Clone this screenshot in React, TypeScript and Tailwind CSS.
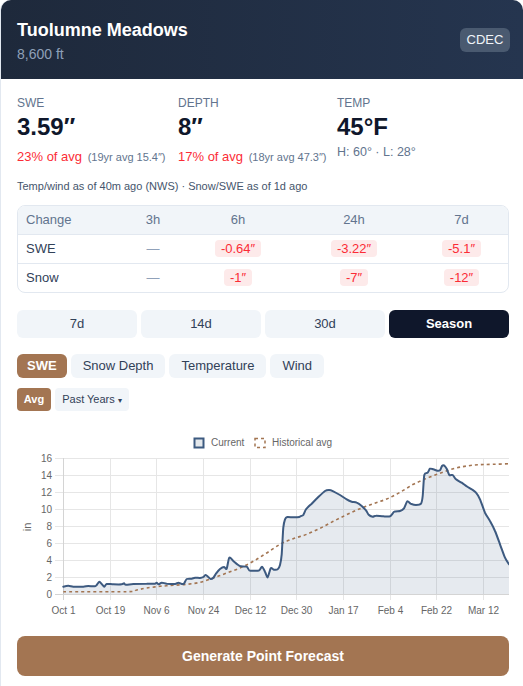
import React from "react";

const BROWN = "#a37552";
const NAVY = "#3d5a80";
const FONT = "Liberation Sans, Arial, sans-serif";

// points read off the reference, in 3x zoom units (x/3, 420 + y/3 -> page px)
const currentRaw: [number, number][] = [
  [190, 497], [205, 494], [220, 497], [250, 497], [265, 495], [285, 496], [290, 492], [298, 482],
  [306, 490], [313, 497], [320, 489], [340, 490], [365, 490], [372, 487], [378, 491], [400, 489],
  [440, 488], [465, 488], [470, 485], [476, 490], [485, 485], [500, 488], [525, 489], [535, 485],
  [545, 489], [552, 488], [560, 474], [575, 473], [585, 470], [600, 471], [610, 468], [617, 462],
  [625, 468], [632, 474], [640, 470], [648, 458], [660, 444], [672, 438], [680, 443], [688, 410],
  [700, 420], [712, 430], [722, 436], [740, 437], [748, 448], [762, 449], [778, 448], [786, 437],
  [795, 452], [803, 469], [812, 442], [822, 446], [833, 445], [840, 432], [845, 400], [850, 320],
  [855, 295], [862, 288], [880, 289], [898, 288], [903, 285], [910, 282], [918, 265], [935, 248],
  [955, 228], [975, 210], [987, 207], [1000, 211], [1020, 222], [1040, 235], [1055, 242],
  [1070, 245], [1085, 255], [1098, 268], [1106, 281], [1118, 287], [1128, 284], [1150, 286],
  [1170, 286], [1183, 272], [1200, 270], [1212, 262], [1222, 241], [1232, 248], [1248, 252],
  [1263, 248], [1268, 225], [1273, 162], [1283, 155], [1290, 143], [1300, 145], [1312, 149],
  [1320, 148], [1326, 135], [1332, 133], [1340, 143], [1348, 162], [1358, 162], [1368, 175],
  [1385, 185], [1400, 196], [1415, 205], [1428, 215], [1440, 235], [1455, 275], [1470, 300],
  [1485, 330], [1500, 370], [1515, 410], [1527, 430],
];

const avgRaw: [number, number][] = [
  [190, 512], [380, 512], [410, 507], [440, 501], [480, 496], [520, 493], [560, 490], [600, 484],
  [640, 471], [680, 456], [720, 441], [760, 421], [800, 396], [840, 370], [880, 353], [920, 340],
  [960, 322], [1000, 301], [1040, 281], [1080, 263], [1120, 248], [1160, 234], [1200, 214],
  [1240, 190], [1280, 172], [1320, 157], [1360, 143], [1400, 135], [1440, 131], [1480, 130],
  [1527, 128],
];

const toPage = (p: [number, number]): [number, number] => [p[0] / 3, 420 + p[1] / 3];
const current = currentRaw.map(toPage);
const avg = avgRaw.map(toPage);

function smooth(pts: [number, number][], k = 8) {
  let d = `M${pts[0][0].toFixed(1)},${pts[0][1].toFixed(1)}`;
  for (let i = 0; i < pts.length - 1; i++) {
    const p0 = pts[i - 1] ?? pts[i];
    const p1 = pts[i];
    const p2 = pts[i + 1];
    const p3 = pts[i + 2] ?? p2;
    const c1x = p1[0] + (p2[0] - p0[0]) / k;
    const c1y = p1[1] + (p2[1] - p0[1]) / k;
    const c2x = p2[0] - (p3[0] - p1[0]) / k;
    const c2y = p2[1] - (p3[1] - p1[1]) / k;
    d += ` C${c1x.toFixed(1)},${c1y.toFixed(1)} ${c2x.toFixed(1)},${c2y.toFixed(1)} ${p2[0].toFixed(1)},${p2[1].toFixed(1)}`;
  }
  return d;
}

const X0 = 63;
const X1 = 509;
const Y0 = 593;
const yOf = (v: number) => Y0 - v * 8.5;
const dates = ["Oct 1", "Oct 19", "Nov 6", "Nov 24", "Dec 12", "Dec 30", "Jan 17", "Feb 4", "Feb 22", "Mar 12"];

function SweChart() {
  const line = smooth(current);
  const area = `${line} L${X1},${Y0} L${X0},${Y0} Z`;
  return (
    <svg width={492} height={195} viewBox="17 425 492 195" className="block" fontFamily={FONT}>
      {/* legend */}
      <rect x={194.5} y={437.5} width={9} height={9} fill="#e4e8ec" stroke={NAVY} strokeWidth={2} />
      <text x={211} y={445} fontSize={10} fill="#666">Current</text>
      <rect x={255} y={437.5} width={10} height={9} fill="none" stroke={BROWN} strokeWidth={1.5} strokeDasharray="3 3" />
      <text x={272} y={445} fontSize={10} fill="#666">Historical avg</text>

      {/* grid */}
      {[0, 2, 4, 6, 8, 10, 12, 14, 16].map((v) => (
        <g key={v}>
          <line x1={55} x2={X1} y1={yOf(v) + 0.5} y2={yOf(v) + 0.5} stroke="#e6e6e6" />
          <text x={52} y={yOf(v) + 3.5} fontSize={10} fill="#666" textAnchor="end">{v}</text>
        </g>
      ))}
      {dates.map((d, i) => {
        const x = Math.round(X0 + i * 46.67) + 0.5;
        return (
          <g key={d}>
            <line x1={x} x2={x} y1={457} y2={599} stroke="#e6e6e6" />
            <text x={x} y={613} fontSize={10} fill="#666" textAnchor="middle">{d}</text>
          </g>
        );
      })}
      <line x1={X0 + 0.5} x2={X0 + 0.5} y1={457} y2={599} stroke="#d4d4d4" />
      <line x1={55} x2={X1} y1={Y0 + 0.5} y2={Y0 + 0.5} stroke="#d4d4d4" />
      <text x={0} y={0} fontSize={11} fill="#666" textAnchor="middle" transform="translate(31 526) rotate(-90)">in</text>

      {/* series */}
      <path d={area} fill={NAVY} fillOpacity={0.13} />
      <path d={smooth(avg, 6)} fill="none" stroke={BROWN} strokeWidth={1.6} strokeDasharray="3 3" />
      <path d={line} fill="none" stroke={NAVY} strokeWidth={2} strokeLinejoin="round" strokeLinecap="round" />
    </svg>
  );
}

function Delta({ v }: { v: string }) {
  return (
    <span className="rounded bg-[#fdeaea] px-1.5 py-px text-[13px] font-medium leading-4 text-red-500">{v}</span>
  );
}

const Dash = () => <span className="text-[13px] text-slate-400">—</span>;

export default function App() {
  const ranges = ["7d", "14d", "30d", "Season"];
  const metrics = ["SWE", "Snow Depth", "Temperature", "Wind"];

  return (
    <div className="min-h-screen bg-white font-['Liberation_Sans',Arial,sans-serif]">
      <div className="rounded-t-[10px] border-l border-slate-200">
        {/* Header */}
        <div className="flex items-center justify-between rounded-t-[10px] bg-gradient-to-r from-[#1e293b] to-[#25354f] pb-[15px] pl-4 pr-[13px] pt-4">
          <div>
            <h1 className="text-lg font-bold leading-7 text-white">Tuolumne Meadows</h1>
            <div className="text-sm leading-5 text-[#8fa0b8]">8,600 ft</div>
          </div>
          <span className="flex h-6 w-[50px] items-center justify-center rounded-md bg-[#4a5a70] text-[13px] font-medium text-slate-100">
            CDEC
          </span>
        </div>

        <div className="pb-4 pl-4 pr-[14px] pt-4">
          {/* Stats */}
          <div className="grid grid-cols-[145px_143px_1fr] gap-x-4">
            <div>
              <div className="text-xs leading-4 text-slate-500">SWE</div>
              <div className="text-2xl font-bold leading-8 text-slate-900">3.59″</div>
              <div className="mt-[5px] whitespace-nowrap text-[13px] leading-[18px] text-red-500">
                23% of avg <span className="ml-0.5 text-[11px] text-slate-500">(19yr avg 15.4″)</span>
              </div>
            </div>
            <div>
              <div className="text-xs leading-4 text-slate-500">DEPTH</div>
              <div className="text-2xl font-bold leading-8 text-slate-900">8″</div>
              <div className="mt-[5px] whitespace-nowrap text-[13px] leading-[18px] text-red-500">
                17% of avg <span className="ml-0.5 text-[11px] text-slate-500">(18yr avg 47.3″)</span>
              </div>
            </div>
            <div>
              <div className="text-xs leading-4 text-slate-500">TEMP</div>
              <div className="text-2xl font-bold leading-8 text-slate-900">45°F</div>
              <div className="text-[12.5px] leading-[18px] text-slate-500">H: 60° · L: 28°</div>
            </div>
          </div>

          <div className="mt-3 text-[11px] leading-4 text-slate-600">
            Temp/wind as of 40m ago (NWS) · Snow/SWE as of 1d ago
          </div>

          {/* Change table */}
          <div className="mt-[11px] overflow-hidden rounded-lg border border-slate-200 text-[13px]">
            <div className="grid h-[29px] grid-cols-[105px_60px_110px_122px_1fr] items-center border-b border-slate-200 bg-slate-100 font-medium text-slate-500">
              <div className="pl-2">Change</div>
              <div className="text-center">3h</div>
              <div className="text-center">6h</div>
              <div className="text-center">24h</div>
              <div className="text-center">7d</div>
            </div>
            <div className="grid h-[29px] grid-cols-[105px_60px_110px_122px_1fr] items-center border-b border-slate-200 text-slate-700">
              <div className="pl-2">SWE</div>
              <div className="text-center"><Dash /></div>
              <div className="text-center"><Delta v="-0.64″" /></div>
              <div className="text-center"><Delta v="-3.22″" /></div>
              <div className="text-center"><Delta v="-5.1″" /></div>
            </div>
            <div className="grid h-[28px] grid-cols-[105px_60px_110px_122px_1fr] items-center text-slate-700">
              <div className="pl-2">Snow</div>
              <div className="text-center"><Dash /></div>
              <div className="text-center"><Delta v="-1″" /></div>
              <div className="text-center"><Delta v="-7″" /></div>
              <div className="text-center"><Delta v="-12″" /></div>
            </div>
          </div>

          {/* Range */}
          <div className="mt-[17px] grid grid-cols-4 gap-1">
            {ranges.map((r) => (
              <button
                key={r}
                className={
                  r === "Season"
                    ? "h-7 rounded-md bg-slate-900 text-[13px] font-semibold text-white"
                    : "h-7 rounded-md bg-slate-100 text-[13px] font-medium text-slate-700"
                }
              >
                {r}
              </button>
            ))}
          </div>

          {/* Metric */}
          <div className="mt-4 flex gap-1">
            {metrics.map((m) =>
              m === "SWE" ? (
                <button key={m} className="h-6 rounded-md bg-[#a37552] px-[10px] text-[13px] font-bold text-white">
                  {m}
                </button>
              ) : (
                <button key={m} className="h-6 rounded-md bg-slate-100 px-3 text-[13px] font-medium text-slate-700">
                  {m}
                </button>
              )
            )}
          </div>

          <div className="mt-[10px] flex gap-1">
            <button className="h-[23px] w-[34px] rounded bg-[#a37552] text-[11px] font-semibold text-white">Avg</button>
            <button className="h-[23px] w-[74px] rounded bg-slate-100 text-[11px] font-medium text-slate-700">
              Past Years <span className="text-[8px]">▾</span>
            </button>
          </div>

          <div className="mt-[15px]">
            <SweChart />
          </div>

          <button className="mt-[15px] h-10 w-full rounded-lg bg-[#a37552] text-sm font-semibold text-white">
            Generate Point Forecast
          </button>
        </div>
      </div>
    </div>
  );
}
